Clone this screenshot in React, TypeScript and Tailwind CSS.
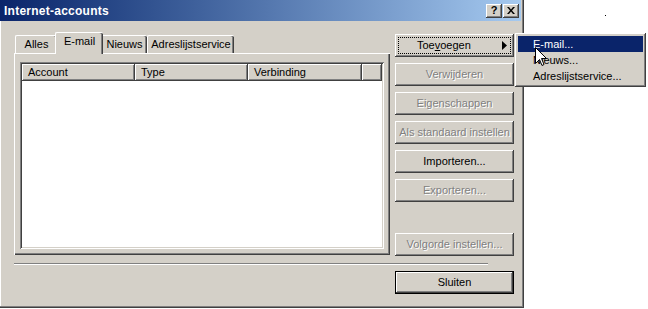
const raised =
  "bg-[#d4d0c8] shadow-[inset_-1px_-1px_#404040,inset_1px_1px_#fff,inset_-2px_-2px_#808080,inset_2px_2px_#d4d0c8]";
const btn = `h-[23px] w-[119px] flex items-center justify-center ${raised}`;
const disabled = "text-[#808080] [text-shadow:1px_1px_0_#fff]";

function Tab({ label, width, active }: { label: string; width: string; active?: boolean }) {
  if (active) {
    return (
      <div
        className={`${width} h-[22px] -mx-[2px] -mb-px relative z-10 flex items-start justify-center pt-[3px] bg-[#d4d0c8] border-t border-l border-white rounded-t-[2px] shadow-[inset_-1px_0_#404040,inset_-2px_0_#808080]`}
      >
        {label}
      </div>
    );
  }
  return (
    <div
      className={`${width} h-[18px] flex items-start justify-center pt-[3px] bg-[#d4d0c8] border-t border-l border-white rounded-t-[2px] shadow-[inset_-1px_0_#404040,inset_-2px_0_#808080]`}
    >
      {label}
    </div>
  );
}

function HeaderCell({ label, width }: { label?: string; width: string }) {
  return (
    <div
      className={`${width} h-[17px] shrink-0 flex items-center pl-[6px] bg-[#d4d0c8] shadow-[inset_-1px_-1px_#404040,inset_1px_1px_#fff,inset_-2px_-2px_#808080]`}
    >
      {label}
    </div>
  );
}

export default function App() {
  return (
    <div className="w-[648px] h-[309px] bg-white relative overflow-hidden font-['Liberation_Sans',Arial,sans-serif] text-[11px] text-black leading-none">
      <div className="w-[524px] h-[308px] flex flex-col bg-[#d4d0c8] pr-[2px] pb-[2px] shadow-[inset_-1px_-1px_#404040,inset_-2px_-2px_#808080]">
        {/* title bar */}
        <div className="h-[21px] w-[521px] flex items-center pl-[4px] pr-[2px] bg-linear-to-r from-[#0a246a] to-[#a6caf0]">
          <span className="text-white font-bold text-[12px] tracking-[0.25px]">Internet-accounts</span>
          <div className={`ml-auto w-[16px] h-[14px] flex items-center justify-center font-bold text-[11px] ${raised}`}>
            ?
          </div>
          <div className={`ml-[1px] w-[16px] h-[14px] flex items-center justify-center ${raised}`}>
            <svg width="8" height="7" viewBox="0 0 8 7">
              <path d="M0 0h2l2 2.5L6 0h2L5 3.5 8 7H6L4 4.5 2 7H0l3-3.5z" fill="#000" />
            </svg>
          </div>
        </div>

        <div className="flex-1 flex flex-col border-l border-white pl-[13px] pt-[10px]">
          <div className="flex h-[225px]">
            {/* tabs + panel */}
            <div className="w-[376px] flex flex-col">
              <div className="h-[22px] flex items-end pl-px">
                <Tab label="Alles" width="w-[42px]" />
                <Tab label="E-mail" width="w-[48px]" active />
                <Tab label="Nieuws" width="w-[46px]" />
                <Tab label="Adreslijstservice" width="w-[87px]" />
              </div>
              <div className="h-[202px] pl-[6px] pt-[9px] pr-[6px] pb-[6px] bg-[#d4d0c8] shadow-[inset_1px_1px_#fff,inset_-1px_-1px_#404040,inset_-2px_-2px_#808080]">
                <div className="w-[364px] h-[187px] p-[2px] bg-white shadow-[inset_1px_1px_#808080,inset_-1px_-1px_#fff,inset_2px_2px_#404040,inset_-2px_-2px_#d4d0c8]">
                  <div className="flex">
                    <HeaderCell label="Account" width="w-[113px]" />
                    <HeaderCell label="Type" width="w-[113px]" />
                    <HeaderCell label="Verbinding" width="w-[114px]" />
                    <HeaderCell width="w-[20px]" />
                  </div>
                </div>
              </div>
            </div>

            {/* right buttons */}
            <div className="ml-[5px] w-[119px] flex flex-col pt-[3px]">
              <div className={`${btn} p-[3px]`}>
                <div className="w-full h-full flex items-center border border-dotted border-black">
                  <span className="pl-[18px]">
                    Toe<span className="underline">v</span>oegen
                  </span>
                  <svg className="ml-auto mr-[3px]" width="5" height="9" viewBox="0 0 5 9">
                    <path d="M0 0L5 4.5L0 9Z" fill="#000" />
                  </svg>
                </div>
              </div>
              <div className={`${btn} ${disabled} mt-[6px]`}>Verwijderen</div>
              <div className={`${btn} ${disabled} mt-[6px]`}>Eigenschappen</div>
              <div className={`${btn} ${disabled} mt-[6px]`}>Als standaard instellen</div>
              <div className={`${btn} mt-[6px]`}>Importeren...</div>
              <div className={`${btn} ${disabled} mt-[6px]`}>Exporteren...</div>
              <div className={`${btn} ${disabled} mt-auto`}>Volgorde instellen...</div>
            </div>
          </div>

          <div className="mt-[7px] w-[474px] h-[2px] border-t border-[#808080] border-b border-b-white" />

          <div className="mt-[6px] flex">
            <div className="ml-[381px] w-[119px] h-[23px] border border-black">
              <div className={`w-full h-full flex items-center justify-center ${raised}`}>Sluiten</div>
            </div>
          </div>
        </div>
      </div>

      {/* stray pixel */}
      <div className="absolute left-[605px] top-[15px] w-px h-px bg-black" />

      {/* popup menu */}
      <div className={`absolute left-[515px] top-[33px] w-[131px] h-[54px] p-[3px] ${raised}`}>
        <div className="h-[16px] flex items-center pl-[15px] bg-[#0a246a] text-white">E-mail...</div>
        <div className="h-[16px] flex items-center pl-[15px]">Nieuws...</div>
        <div className="h-[16px] flex items-center pl-[15px]">Adreslijstservice...</div>
      </div>

      {/* mouse cursor */}
      <svg className="absolute left-[535px] top-[47px]" width="12" height="20" viewBox="0 0 12 20">
        <path d="M0.5 0.5V16.5L4.5 12.5L7 18.5L9 17.5L6.5 11.5H11.5Z" fill="#fff" stroke="#000" strokeWidth="1" />
      </svg>
    </div>
  );
}
